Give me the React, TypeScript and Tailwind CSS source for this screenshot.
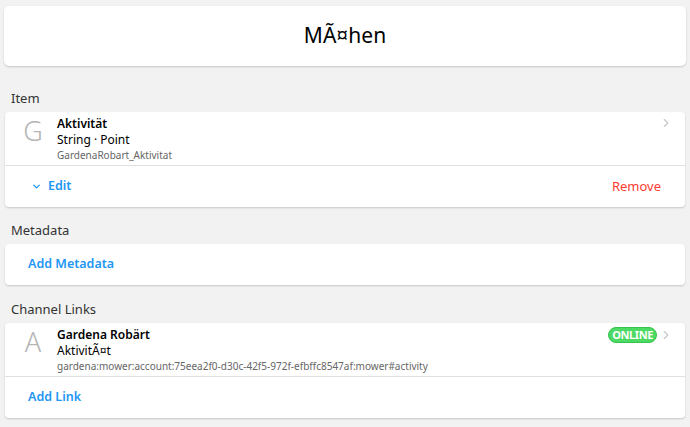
import { ChevronDown, ChevronRight } from 'lucide-react';

const font = { fontFamily: '"Noto Sans", "Open Sans", sans-serif' };

function Label({ children }: { children: string }) {
  return <div className="px-[11px] text-[13px] leading-[18px] text-[#333]">{children}</div>;
}

function Card({ children }: { children: React.ReactNode }) {
  return (
    <div className="mx-[5px] rounded-[4px] bg-white shadow-[0_1px_2px_rgba(0,0,0,0.18)]">{children}</div>
  );
}

function Row({
  letter,
  title,
  sub,
  footer,
  badge,
}: {
  letter: string;
  title: string;
  sub: string;
  footer: string;
  badge?: boolean;
}) {
  return (
    <div className="relative flex h-[54px] border-b border-[#e0e0e0]">
      <div className="w-[52px] pl-[4px] pt-[3px] text-center text-[27px] font-light leading-[32px] text-[#b5b5b5]">
        {letter}
      </div>
      <div className="flex flex-col pt-[4px]">
        <div className="text-[12px] font-semibold leading-[16px] text-black">{title}</div>
        <div className="text-[12px] leading-[16px] text-black">{sub}</div>
        <div className="text-[10px] leading-[14px] text-[#666]">{footer}</div>
      </div>
      <div className="absolute right-[12px] top-[4px] flex items-center gap-[2px]">
        {badge && (
          <span className="rounded-full border border-[#36c24f] bg-[#4cd964] px-[3px] text-[11px] font-bold leading-[14px] tracking-[-0.4px] text-white">
            ONLINE
          </span>
        )}
        <ChevronRight className="h-[14px] w-[14px] text-[#c7c7cc]" strokeWidth={2} />
      </div>
    </div>
  );
}

export default function App() {
  return (
    <div className="min-h-[427px] w-[690px] bg-[#f2f2f2] pt-[6px]" style={font}>
      <div className="mx-[4px] flex h-[60px] items-center justify-center rounded-[5px] bg-white shadow-[0_1px_2px_rgba(0,0,0,0.18)]">
        <span className="text-[21px] text-black">MÃ¤hen</span>
      </div>

      <div className="mt-[23px]">
        <Label>Item</Label>
      </div>
      <div className="mt-[5px]">
        <Card>
          <Row letter="G" title="Aktivität" sub="String · Point" footer="GardenaRobart_Aktivitat" />
          <div className="flex h-[41px] items-center justify-between pl-[26px] pr-[24px] text-[12.5px] font-semibold text-[#2196f3]">
            <div className="flex items-center gap-[6px]">
              <ChevronDown className="h-[11px] w-[11px]" strokeWidth={3} />
              <span>Edit</span>
            </div>
            <span className="text-[13px] font-normal text-[#ff3b30]">Remove</span>
          </div>
        </Card>
      </div>

      <div className="mt-[14px]">
        <Label>Metadata</Label>
      </div>
      <div className="mt-[5px]">
        <Card>
          <div className="flex h-[41px] items-center pl-[23px] text-[12.5px] font-semibold text-[#2196f3]">Add Metadata</div>
        </Card>
      </div>

      <div className="mt-[15px]">
        <Label>Channel Links</Label>
      </div>
      <div className="mt-[5px]">
        <Card>
          <Row
            letter="A"
            title="Gardena Robärt"
            sub="AktivitÃ¤t"
            footer="gardena:mower:account:75eea2f0-d30c-42f5-972f-efbffc8547af:mower#activity"
            badge
          />
          <div className="flex h-[41px] items-center pl-[23px] text-[12.5px] font-semibold text-[#2196f3]">Add Link</div>
        </Card>
      </div>
    </div>
  );
}
